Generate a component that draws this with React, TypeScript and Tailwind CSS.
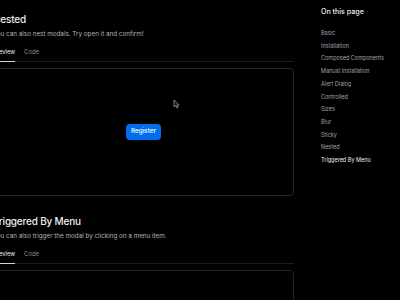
import { FC } from "react";

const tocItems = [
  "Basic",
  "Installation",
  "Composed Components",
  "Manual Installation",
  "Alert Dialog",
  "Controlled",
  "Sizes",
  "Blur",
  "Sticky",
  "Nested",
  "Triggered By Menu",
];

const Tabs: FC = () => (
  <div className="flex gap-[9px] border-b border-[#1c1c1f]">
    <div className="relative pb-[4px] text-[#ededed]">
      Preview
      <div className="absolute left-0 right-0 bottom-[-1px] h-[1.5px] bg-[#d4d4d8]" />
    </div>
    <div className="pb-[4px] text-[#8b8b93]">Code</div>
  </div>
);

const Section: FC<{ title: string; text: string; children?: React.ReactNode; boxClass: string }> = ({
  title,
  text,
  children,
  boxClass,
}) => (
  <section>
    <h2 className="text-[10px] leading-[14px] font-medium tracking-[-0.02em] text-[#ededed]">{title}</h2>
    <p className="mt-[3px] text-[6.3px] leading-[10px] text-[#b4b4bb]">{text}</p>
    <div className="mt-[8px] text-[5.9px] leading-[10px]">
      <Tabs />
    </div>
    <div className={"mt-[6px] rounded-[4px] border border-[#232326] " + boxClass}>{children}</div>
  </section>
);

export default function App() {
  return (
    <div
      className="relative flex h-[300px] w-[400px] overflow-hidden bg-black"
      style={{ fontFamily: "Inter, 'Noto Sans', sans-serif" }}
    >
      <main className="ml-[-7px] w-[301px] shrink-0 pt-[12px]">
        <Section
          title="Nested"
          text="You can also nest modals. Try open it and confirm!"
          boxClass="h-[128px] flex items-center justify-center"
        >
          <button className="h-[16px] w-[35px] rounded-[4px] bg-[#006fee] text-[6.3px] font-medium text-white">
            Register
          </button>
        </Section>
        <div className="mt-[18px]">
          <Section
            title="Triggered By Menu"
            text="You can also trigger the modal by clicking on a menu item."
            boxClass="h-[60px]"
          />
        </div>
      </main>
      <aside className="ml-[27px] pt-[7px]">
        <div className="text-[7.1px] leading-[10px] font-medium text-[#ededed]">On this page</div>
        <ul className="mt-[10px] flex flex-col">
          {tocItems.map((item, i) => (
            <li
              key={item}
              className={
                "text-[5.5px] leading-[12.7px] " +
                (i === tocItems.length - 1 ? "text-[#ededed]" : "text-[#a1a1aa]")
              }
            >
              {item}
            </li>
          ))}
        </ul>
      </aside>
      <svg className="absolute left-[173px] top-[99px]" width="7" height="10" viewBox="0 0 7 10">
        <path d="M1 1 L1 8 L2.8 6.4 L4 9 L5 8.5 L3.9 6 L6.2 6 Z" fill="#111" stroke="#9a9a9a" strokeWidth="0.8" />
      </svg>
    </div>
  );
}
